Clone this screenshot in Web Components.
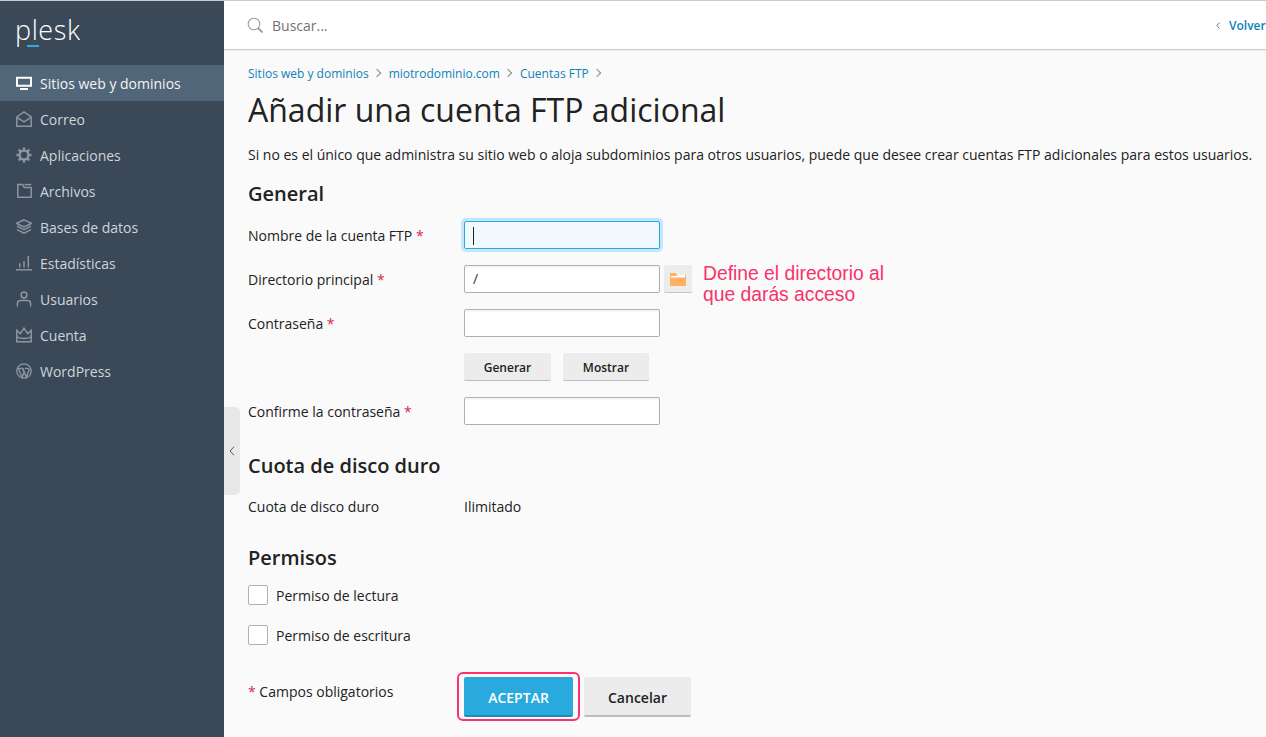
<!DOCTYPE html>
<html lang="es">
<head>
<meta charset="utf-8">
<title>Plesk</title>
<style>
  html, body { margin: 0; height: 100%; overflow: hidden; }
  body { font-family: "Open Sans", sans-serif; font-size: 14px; color: #222; background: #fafafa; }
</style>
</head>
<body>
<plesk-app>
  <plesk-sidebar slot="sidebar">
    <plesk-nav-item icon="monitor" active>Sitios web y dominios</plesk-nav-item>
    <plesk-nav-item icon="mail">Correo</plesk-nav-item>
    <plesk-nav-item icon="gear">Aplicaciones</plesk-nav-item>
    <plesk-nav-item icon="folder">Archivos</plesk-nav-item>
    <plesk-nav-item icon="layers">Bases de datos</plesk-nav-item>
    <plesk-nav-item icon="chart">Estadísticas</plesk-nav-item>
    <plesk-nav-item icon="user">Usuarios</plesk-nav-item>
    <plesk-nav-item icon="crown">Cuenta</plesk-nav-item>
    <plesk-nav-item icon="wp">WordPress</plesk-nav-item>
  </plesk-sidebar>
  <plesk-header slot="header"></plesk-header>

  <plesk-breadcrumbs>
    <a>Sitios web y dominios</a>
    <a>miotrodominio.com</a>
    <a>Cuentas FTP</a>
  </plesk-breadcrumbs>
  <plesk-title>Añadir una cuenta FTP adicional</plesk-title>
  <plesk-hint>Si no es el único que administra su sitio web o aloja subdominios para otros usuarios, puede que desee crear cuentas FTP adicionales para estos usuarios.</plesk-hint>

  <plesk-section heading="General" style="--top: 15px">
    <plesk-field label="Nombre de la cuenta FTP" required><plesk-input focused></plesk-input></plesk-field>
    <plesk-field label="Directorio principal" required>
      <plesk-input value="/"></plesk-input>
      <plesk-folder-button></plesk-folder-button>
      <plesk-note>Define el directorio al<br>que darás acceso</plesk-note>
    </plesk-field>
    <plesk-field label="Contraseña" required><plesk-input></plesk-input></plesk-field>
    <plesk-field>
      <plesk-button small style="width: 87px">Generar</plesk-button>
      <plesk-button small style="width: 86px; margin-left: 12px">Mostrar</plesk-button>
    </plesk-field>
    <plesk-field label="Confirme la contraseña" required><plesk-input></plesk-input></plesk-field>
  </plesk-section>

  <plesk-section heading="Cuota de disco duro" style="--top: 27px">
    <plesk-field label="Cuota de disco duro" style="margin-top: -1px">Ilimitado</plesk-field>
  </plesk-section>

  <plesk-section heading="Permisos" style="--top: 24px">
    <plesk-check>Permiso de lectura</plesk-check>
    <plesk-check>Permiso de escritura</plesk-check>
  </plesk-section>

  <plesk-footer>
    <plesk-button primary highlighted style="width: 109px">ACEPTAR</plesk-button>
    <plesk-button style="width: 107px; margin-left: 11px">Cancelar</plesk-button>
  </plesk-footer>
</plesk-app>

<script>
function define(name, css, html) {
    class El extends HTMLElement {
        constructor() {
            super();
            this.attachShadow({ mode: 'open' });
        }
        connectedCallback() {
            const body = typeof html === 'function' ? html(this) : html;
            this.shadowRoot.innerHTML = `<style>${css}</style>${body}`;
        }
    }
    customElements.define(name, El);
}

// 16x16 sidebar icons
const ICONS = {
    monitor: '<path d="M1 2.7h14v8H1z" stroke-width="2"/><path d="M4 13h8v2H4z" fill="currentColor" stroke="none"/>',
    mail: '<path d="M.8 6 8 .9 15.2 6v9.2H.8z"/><path d="M1 6.4 8 10.8l7-4.4"/>',
    gear: '<circle cx="8" cy="8" r="4.4" stroke-width="2.4"/><path d="M8 .5v2.4M8 13.1v2.4M.5 8h2.4M13.1 8h2.4M2.7 2.7l1.7 1.7M11.6 11.6l1.7 1.7M2.7 13.3l1.7-1.7M11.6 4.4l1.7-1.7" stroke-width="2.6"/>',
    folder: '<path d="M1.8 1.6v12.6h13.4V4.6H8.2L6.7 1.6z"/><path d="M8.6 1.6h6.6"/>',
    layers: '<path d="M8 .8 15.4 4.4 8 8 .6 4.4z"/><path d="M1 7.2 8 10.7l7-3.5M1 10.6 8 14.2l7-3.6"/>',
    chart: '<path d="M0 14.8h16"/><path d="M3.8 12.6V8.2M8 12.6V6M12.3 12.6V1"/>',
    user: '<circle cx="8" cy="4" r="2.9"/><path d="M1.4 15.6v-2.9c0-2 1.5-3.2 3.2-3.2h6.8c1.7 0 3.2 1.2 3.2 3.2v2.9"/>',
    crown: '<path d="M.8 3.4 4.4 6.6 8 1.2l3.6 5.4 3.6-3.2v11.4H.8z"/><path d="M.8 9.8c4 2.2 10.4 2.2 14.4 0"/>',
    wp: '<circle cx="8" cy="8" r="7.2" stroke-width="1.3"/><path d="M2.4 5.4 6.2 14.4 8 9.2 6.6 5.4M7 5.4l3.3 9 2.4-6.4c.6-1.6-.2-2.3-.9-2.6M1.800 5.4h5.6M8.800 5.4h3" stroke-width="1.4"/>'
};

define('plesk-app', `
    :host { display: flex; height: 737px; width: 1266px; border-top: 1px solid #cbcbcb; box-sizing: border-box; }
    .side { flex: 0 0 224px; position: relative; }
    .main { flex: 1; min-width: 0; display: flex; flex-direction: column; }
    .content { padding: 0 0 0 24px; position: relative; }
    .toggle { position: absolute; left: 224px; top: 406px; width: 16px; height: 88px; background: #e8e8e8; border-radius: 0 5px 5px 0; display: flex; align-items: center; justify-content: center; }
`, `
    <div class="side"><slot name="sidebar"></slot>
      <div class="toggle"><svg width="6" height="10" viewBox="0 0 6 10"><path d="M5 .8 1 5l4 4.2" fill="none" stroke="#555" stroke-width="1"/></svg></div>
    </div>
    <div class="main"><slot name="header"></slot><div class="content"><slot></slot></div></div>
`);

define('plesk-sidebar', `
    :host { display: block; height: 100%; background: #3a4858; }
    .logo { height: 64px; padding: 0 0 0 15px; box-sizing: border-box; position: relative; font: 300 27px/57px "Open Sans", sans-serif; color: #fff; letter-spacing: .6px; }
    .logo i { position: absolute; left: 27px; top: 44px; width: 12px; height: 2px; background: #36a9d4; }
`, `<div class="logo">plesk<i></i></div><slot></slot>`);

define('plesk-nav-item', `
    :host { display: flex; align-items: center; height: 36px; padding-left: 16px; color: #cfd5da; font-size: 14px; }
    :host([active]) { background: #526679; color: #f2f4f6; }
    svg { width: 16px; height: 16px; margin-right: 8px; color: #8b96a1; fill: none; stroke: currentColor; stroke-width: 1.5; flex: none; }
    :host([active]) svg { color: #fff; }
`, el => `<svg viewBox="0 0 16 16">${ICONS[el.getAttribute('icon')]}</svg><slot></slot>`);

define('plesk-header', `
    :host { display: flex; align-items: center; height: 48px; background: #fff; border-bottom: 1px solid #cdcdcd; box-shadow: 0 1px 1px rgba(0,0,0,.05); padding-left: 23px; }
    svg { flex: none; margin-right: 8px; }
    .q { flex: 1; color: #737373; font-size: 14px; }
    .back { color: #0f83b8; font-weight: 600; font-size: 12px; white-space: nowrap; width: 50px; display: flex; align-items: center; gap: 9px; overflow: hidden; }
`, `
    <svg width="17" height="17" viewBox="0 0 17 17"><circle cx="7" cy="7" r="5.8" fill="none" stroke="#9a9a9a" stroke-width="1.1"/><path d="M11.2 11.2 15.5 15.5" stroke="#9a9a9a" stroke-width="1.8"/></svg>
    <span class="q">Buscar...</span>
    <span class="back"><svg style="margin:0" width="4" height="7" viewBox="0 0 4 7"><path d="M3.5 .5 .8 3.5l2.700 3" fill="none" stroke="#777"/></svg>Volver</span>
`);

define('plesk-breadcrumbs', `
    :host { display: flex; align-items: center; height: 18px; margin-top: 14px; font-size: 12px; color: #0f83b8; }
    ::slotted(a) { display: inline-flex; align-items: center; }
    ::slotted(a)::after { content: ""; display: inline-block; width: 5px; height: 5px; border-top: 1px solid #8a8a8a; border-right: 1px solid #8a8a8a; transform: rotate(45deg); margin: 0 9px 0 5px; }
`, `<slot></slot>`);

define('plesk-title', `
    :host { display: block; font-size: 32px; line-height: 40px; margin-top: 8px; color: #222; }
`, `<slot></slot>`);

define('plesk-hint', `
    :host { display: block; line-height: 20px; margin-top: 15px; white-space: nowrap; color: #222; }
`, `<slot></slot>`);

define('plesk-section', `
    :host { display: block; margin-top: var(--top, 0); }
    h2 { margin: 0 0 13px; font-size: 20px; line-height: 28px; font-weight: 600; color: #222; }
`, el => `<h2>${el.getAttribute('heading')}</h2><slot></slot>`);

define('plesk-field', `
    :host { display: flex; align-items: center; min-height: 28px; margin-bottom: 16px; position: relative; }
    .label { flex: 0 0 216px; color: #222; }
    .req { color: #d02d4c; }
`, el => `<span class="label">${el.getAttribute('label') || ''}${el.hasAttribute('required') ? ' <span class="req">*</span>' : ''}</span><slot></slot>`);

define('plesk-input', `
    :host { display: block; width: 196px; height: 28px; box-sizing: border-box; border: 1px solid #b0b0b0; border-radius: 2px; background: #fff; box-shadow: inset 0 2px 2px rgba(0,0,0,.04); padding-left: 8px; line-height: 26px; color: #333; }
    :host([focused]) { border-color: #28aade; background: #f1f9fe; box-shadow: 0 0 0 3px #c5e6fa; }
    .caret { display: inline-block; width: 1px; height: 18px; background: #222; vertical-align: middle; }
`, el => el.hasAttribute('focused') ? '<span class="caret"></span>' : (el.getAttribute('value') || ''));

define('plesk-folder-button', `
    :host { display: flex; align-items: center; justify-content: center; width: 28px; height: 28px; margin-left: 4px; background: #ececec; border-bottom: 1px solid #c4c4c4; border-radius: 2px; box-sizing: border-box; }
`, `<svg width="16" height="14" viewBox="0 0 16 14"><path d="M0 2a1 1 0 0 1 1-1h4.5l1.5 2h8a1 1 0 0 1 1 1v9a1 1 0 0 1-1 1H1a1 1 0 0 1-1-1z" fill="#ffb063"/><path d="M1 4h5.6l1-1H15v2.4H1z" fill="#fff"/></svg>`);

define('plesk-note', `
    :host { position: absolute; left: 455px; top: -2px; font: 19.3px/21px "Liberation Sans", sans-serif; color: #f8326a; white-space: nowrap; }
`, `<slot></slot>`);

define('plesk-button', `
    :host { display: flex; align-items: center; justify-content: center; height: 40px; padding-top: 2px; box-sizing: border-box; background: #ececec; border-bottom: 2px solid #bdbdbd; border-radius: 2px; font-weight: 600; font-size: 14px; color: #222; position: relative; }
    :host([small]) { height: 28px; font-size: 12px; padding-top: 1px; border-bottom-width: 1px; }
    :host([primary]) { background: #28aade; border-bottom-color: #2288b6; color: #fff; }
    :host([highlighted])::after { content: ""; position: absolute; inset: -5px -7px -6px -7px; border: 2px solid #f8326a; border-radius: 6px; }
`, `<slot></slot>`);

define('plesk-check', `
    :host { display: flex; align-items: center; height: 20px; margin-bottom: 20px; }
    i { width: 18px; height: 18px; border: 1px solid #b0b0b0; border-radius: 2px; background: #fff; margin-right: 8px; flex: none; }
`, `<i></i><slot></slot>`);

define('plesk-footer', `
    :host { display: flex; align-items: flex-start; position: relative; margin-top: 32px; padding-left: 216px; }
    .req { position: absolute; left: 0; top: 5px; line-height: 20px; }
    .req span { color: #d02d4c; }
`, `<div class="req"><span>*</span> Campos obligatorios</div><slot></slot>`);
</script>
</body>
</html>
